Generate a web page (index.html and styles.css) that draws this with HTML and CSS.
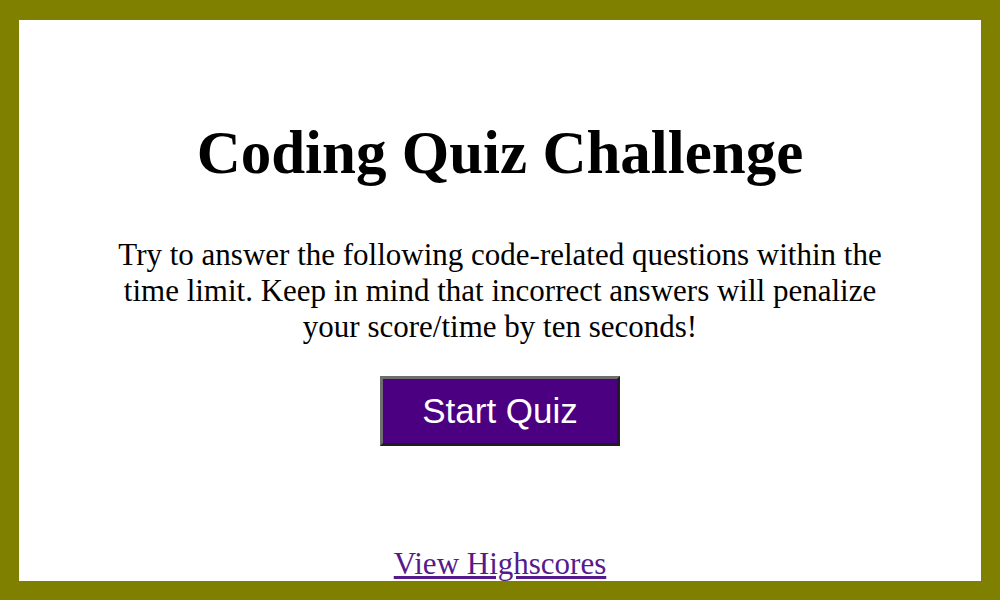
FILE: index.html
```html
<!DOCTYPE html>
<html lang="en">
<head>
<meta charset="utf-8">
<title>Coding Quiz Challenge</title>
<link rel="stylesheet" href="styles.css">
</head>
<body>
<div class="frame">
  <main class="intro">
    <h1 class="title">Coding Quiz Challenge</h1>
    <p class="lead">Try to answer the following code-related questions within the time limit. Keep in mind that incorrect answers will penalize your score/time by ten seconds!</p>
    <button class="start-btn" type="button">Start Quiz</button>
    <a class="scores-link" href="#">View Highscores</a>
  </main>
</div>
</body>
</html>
```
FILE: styles.css
```css
html, body {
  margin: 0;
  padding: 0;
  height: 100%;
}

body {
  font-family: "Liberation Serif", "Times New Roman", serif;
  color: #000;
  background: #808000;
}

.frame {
  box-sizing: border-box;
  height: 600px;
  border: 19px solid #808000;
  border-top-width: 20px;
  background: #fff;
  overflow: hidden;
}

.intro {
  display: flex;
  flex-direction: column;
  align-items: center;
  text-align: center;
}

.title {
  margin: 98px 0 0;
  font-size: 61px;
  font-weight: bold;
  line-height: 1.15;
}

.lead {
  margin: 49px 0 0;
  max-width: 790px;
  font-size: 31px;
  line-height: 36px;
}

.start-btn {
  margin-top: 31px;
  width: 240px;
  height: 70px;
  background: #4b0082;
  color: #fff;
  font-family: "Liberation Sans", Arial, sans-serif;
  font-size: 35px;
  border: 3px solid;
  border-color: #6e6e6e #1e1e1e #1e1e1e #6e6e6e;
  padding: 0;
}

.scores-link {
  margin-top: 100px;
  font-size: 31px;
  color: #551a8b;
}
```
